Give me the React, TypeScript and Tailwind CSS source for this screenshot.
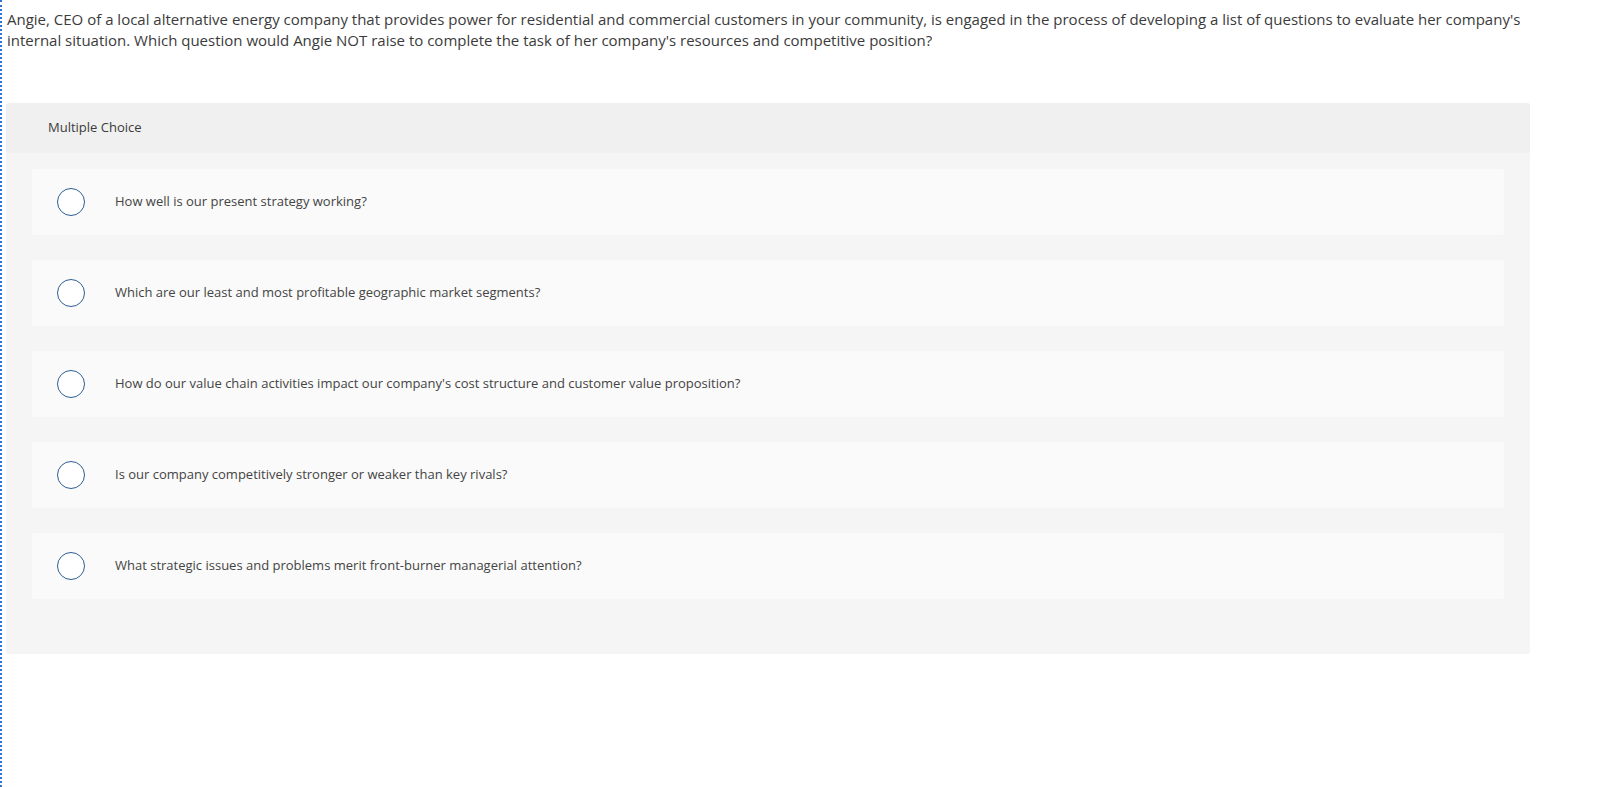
const OPTIONS = [
  "How well is our present strategy working?",
  "Which are our least and most profitable geographic market segments?",
  "How do our value chain activities impact our company's cost structure and customer value proposition?",
  "Is our company competitively stronger or weaker than key rivals?",
  "What strategic issues and problems merit front-burner managerial attention?",
];

export default function App() {
  return (
    <div
      className="min-h-screen border-l-2 border-dotted border-[#2f72d0] bg-white text-[#333]"
      style={{ fontFamily: "'Open Sans', Lato, sans-serif" }}
    >
      <p className="pl-[5px] pr-[50px] pt-[9px] text-[15px] leading-[21px] text-[#3b3b3b]">
        Angie, CEO of a local alternative energy company that provides power for residential and commercial customers in
        your community, is engaged in the process of developing a list of questions to evaluate her company's internal
        situation. Which question would Angie NOT raise to complete the task of her company's resources and competitive
        position?
      </p>

      <div className="ml-[4px] mt-[52px] w-[1524px] overflow-hidden rounded-[3px] bg-[#f5f5f5]">
        <div className="flex h-[50px] items-center bg-[#f0f0f0] pl-[42px] text-[13px] text-[#3b3b3b]">
          Multiple Choice
        </div>
        <div className="flex flex-col gap-[25px] px-[26px] pb-[55px] pt-[16px]">
          {OPTIONS.map((opt) => (
            <div key={opt} className="flex h-[66px] items-center rounded-[3px] bg-[#fafafa] pl-[25px]">
              <span className="h-[28px] w-[28px] shrink-0 rounded-full border-[1.5px] border-[#2d5e91] bg-white" />
              <span className="ml-[30px] text-[13px] text-[#444]">{opt}</span>
            </div>
          ))}
        </div>
      </div>
    </div>
  );
}
